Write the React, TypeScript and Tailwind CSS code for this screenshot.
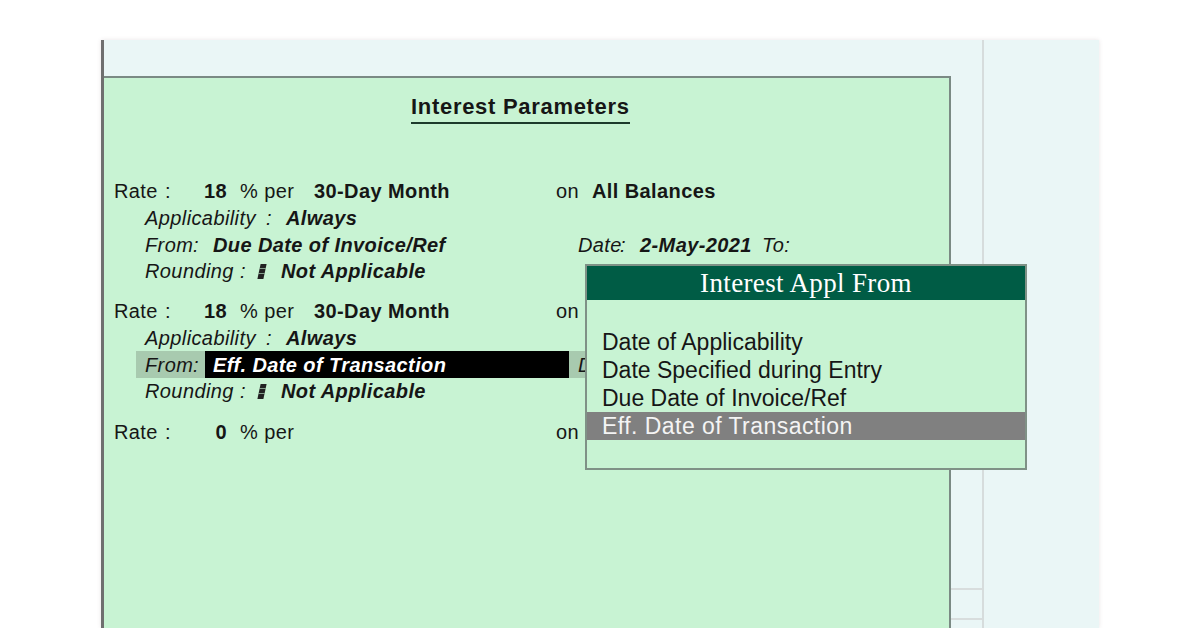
import React from "react";

const F = { fontFamily: '"Liberation Sans", Arial, sans-serif' };

function Glyph() {
  return (
    <span className="inline-flex w-[22px] items-center">
      <span className="relative inline-block h-[15px] w-[6px] -skew-x-12 bg-[#222]">
        <span className="absolute left-0 right-0 top-[4px] h-px bg-[#c8f3d3]/60" />
        <span className="absolute left-0 right-0 top-[9px] h-px bg-[#c8f3d3]/60" />
      </span>
    </span>
  );
}

function RateRow({ num, per, on }: { num: string; per?: string; on?: string }) {
  return (
    <div className="flex h-[26.67px] items-center whitespace-nowrap pl-[10px]">
      <span className="w-[51px]">Rate</span>
      <span className="w-[10px]">:</span>
      <span className="w-[52px] text-right font-bold">{num}</span>
      <span className="w-[13px]" />
      <span className="w-[74px]">% per</span>
      <span className="w-[242px] font-bold">{per ?? ""}</span>
      <span className="w-[36px]">on</span>
      <span className="font-bold">{on ?? ""}</span>
    </div>
  );
}

function ApplRow() {
  return (
    <div className="flex h-[26.67px] items-center whitespace-nowrap pl-[41px] italic">
      <span className="w-[121px]">Applicability</span>
      <span className="w-[20px]">:</span>
      <span className="font-bold">Always</span>
    </div>
  );
}

function RoundRow() {
  return (
    <div className="flex h-[26.67px] items-center whitespace-nowrap pl-[41px] italic">
      <span className="w-[95px]">Rounding</span>
      <span className="w-[19px]">:</span>
      <Glyph />
      <span className="font-bold">Not Applicable</span>
    </div>
  );
}

export default function App() {
  return (
    <div className="relative h-[628px] w-[1200px] overflow-hidden bg-white pl-[101px] pt-[40px]" style={F}>
      <div className="flex h-[588px] w-[998px] border-l-[3px] border-[#6f6f6f] bg-[#eaf6f6] shadow-[0_0_4px_rgba(120,100,110,0.18)]">
        <div className="flex w-[878px] flex-col">
          <div className="h-[36px] shrink-0" />
          <div className="flex flex-1">
            <div className="w-[847px] border-r-2 border-t-2 border-[#7b8a84] bg-[#c8f3d3] text-[20px] tracking-[0.4px] text-[#161616]">
              <div className="mt-[14px] pl-[307px]">
                <span className="inline-block border-b-2 border-[#1d3a2b] pb-[2px] text-[22px] font-bold leading-[26px] tracking-[0.7px]">
                  Interest Parameters
                </span>
              </div>

              <div className="mt-[54px]">
                <RateRow num="18" per="30-Day Month" on="All Balances" />
                <ApplRow />
                <div className="flex h-[26.67px] items-center whitespace-nowrap pl-[41px] italic">
                  <span className="w-[48px]">From</span>
                  <span className="w-[20px]">:</span>
                  <span className="w-[365px] font-bold">Due Date of Invoice/Ref</span>
                  <span className="w-[42px]">Date</span>
                  <span className="w-[20px]">:</span>
                  <span className="w-[122px] font-bold">2-May-2021</span>
                  <span>To:</span>
                </div>
                <RoundRow />
              </div>

              <div className="mt-[13.33px]">
                <RateRow num="18" per="30-Day Month" />
                <ApplRow />
                <div className="flex h-[26.67px] whitespace-nowrap pl-[32px] italic">
                  <div className="flex w-[500px] items-stretch bg-[#a8caaf]">
                    <span className="flex w-[57px] items-center pl-[9px]">
                      <span className="w-[48px]">From</span>
                    </span>
                    <span className="flex w-[12px] items-center">:</span>
                    <span className="flex w-[364px] items-center bg-black pl-[8px] font-bold text-white">
                      Eff. Date of Transaction
                    </span>
                    <span className="w-[9px]" />
                    <span className="flex w-[7px] items-center overflow-hidden">D</span>
                  </div>
                </div>
                <RoundRow />
              </div>

              <div className="mt-[14.33px]">
                <RateRow num="0" />
              </div>
            </div>
            <div className="flex w-[31px] flex-col">
              <div className="flex-1" />
              <div className="h-[30px] border-t-2 border-[#d8dddd]" />
              <div className="h-[10px] border-t-2 border-[#d8dddd]" />
            </div>
          </div>
        </div>
        <div className="w-[2px] bg-[#d6dcdc]" />
        <div className="flex-1" />
      </div>

      {/* Popup */}
      <div className="absolute left-[585px] top-[264px] w-[442px] border-2 border-[#7f9186] bg-[#c8f3d3]">
        <div
          className="flex h-[34px] items-center justify-center bg-[#005c45] text-[27px] tracking-[0.35px] text-white"
          style={{ fontFamily: '"Liberation Serif", "Times New Roman", serif' }}
        >
          Interest Appl From
        </div>
        <div className="text-[23px] leading-[28px] text-[#161616]">
          <div className="h-[28px]" />
          <div className="h-[28px] pl-[15px]">Date of Applicability</div>
          <div className="h-[28px] pl-[15px]">Date Specified during Entry</div>
          <div className="h-[28px] pl-[15px]">Due Date of Invoice/Ref</div>
          <div className="h-[28px] bg-[#808080] pl-[15px] tracking-[0.45px] text-[#f4f4f4]">Eff. Date of Transaction</div>
          <div className="h-[28px]" />
        </div>
      </div>
    </div>
  );
}
